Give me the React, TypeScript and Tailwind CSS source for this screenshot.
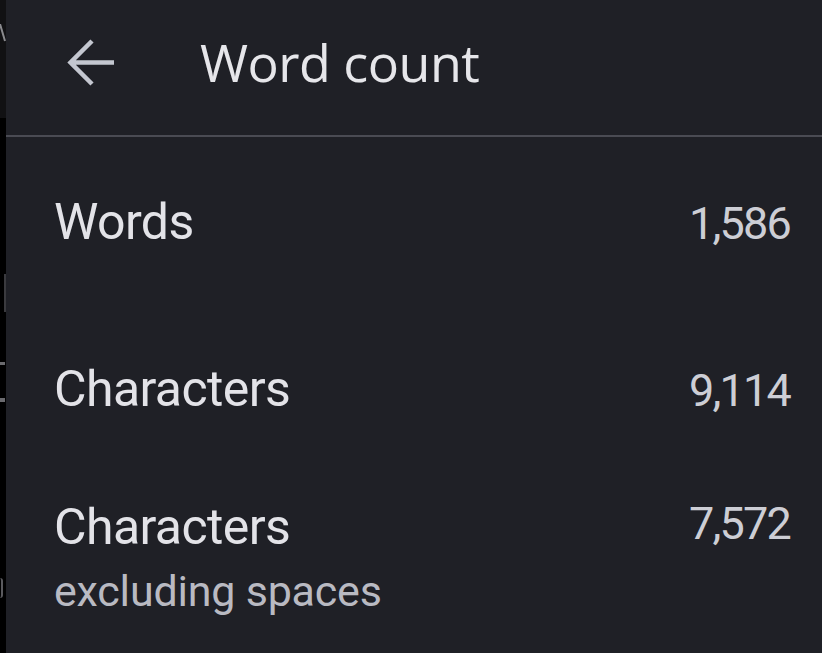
const rows = [
  { label: 'Words', value: '1,586' },
  { label: 'Characters', value: '9,114' },
];

export default function App() {
  return (
    <div className="flex w-[822px] h-[653px] overflow-hidden bg-black" style={{ fontFamily: 'Roboto, "Liberation Sans", sans-serif' }}>
      {/* Page behind the dialog, mostly hidden */}
      <div className="relative w-[6px] shrink-0 overflow-hidden bg-black">
        <div className="h-[118px] bg-[#111113]" />
        <svg className="absolute left-0 top-[24px]" width="6" height="18" viewBox="0 0 6 18" fill="none">
          <path d="M0 0L5 17" stroke="#8a8a8e" strokeWidth="2" />
        </svg>
        <div className="absolute left-[4px] top-[274px] w-[2px] h-[38px] bg-[#3a3a3e]" />
        <div className="absolute left-0 top-[362px] w-[5px] h-[3px] bg-[#6a6a6e]" />
        <div className="absolute left-0 top-[398px] w-[5px] h-[4px] bg-[#6a6a6e]" />
        <div className="absolute left-0 top-[578px] w-[3px] h-[20px] rounded-r-full border-r-2 border-[#5a5a5e]" />
      </div>

      {/* Word count dialog */}
      <div className="flex-1 bg-[#1f2026] text-[#e3e3e8]">
        <div className="flex items-center h-[135px] pb-[12px] pl-[60px]">
          <svg width="50" height="48" viewBox="0 0 50 48" fill="none" className="shrink-0 mt-[2px]">
            <path d="M48 23.5H4M26 2L4.5 23.5L26 45" stroke="#c4c7d0" strokeWidth="4.5" />
          </svg>
          <h1 className="ml-[84px] text-[52px] leading-none tracking-[-0.5px] text-[#e6e6ea]" style={{ fontFamily: '"Open Sans", Roboto, sans-serif' }}>
            Word count
          </h1>
        </div>
        <div className="h-[2px] bg-[#4a4b53]" />

        <div className="pl-[48px] pr-[32px]">
          {rows.map((row, i) => (
            <div
              key={row.label}
              className={`flex items-baseline justify-between ${i === 0 ? 'pt-[59px]' : 'pt-[113px]'}`}
            >
              <span className="text-[50px] leading-[52px] tracking-[-0.6px]">{row.label}</span>
              <span className="text-[45px] leading-[52px] tracking-[-1.8px] text-[#cdced5]">{row.value}</span>
            </div>
          ))}

          <div className="flex items-start justify-between pt-[84px]">
            <div>
              <div className="text-[50px] leading-[52px] tracking-[-0.6px]">Characters</div>
              <div className="mt-[16px] text-[43px] leading-[44px] tracking-[-0.2px] text-[#b9bac2]">excluding spaces</div>
            </div>
            <span className="text-[45px] leading-[52px] tracking-[-1.8px] text-[#cdced5] -mt-[3px]">7,572</span>
          </div>
        </div>
      </div>
    </div>
  );
}
